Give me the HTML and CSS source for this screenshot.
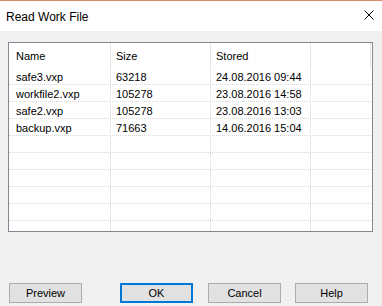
FILE: index.html
```html
<!DOCTYPE html>
<html lang="en">
<head>
  <meta charset="UTF-8">
  <title>Read Work File</title>
  <link rel="stylesheet" href="styles.css">
</head>
<body>
  <div class="window">
    <div class="titlebar">
      <span class="title">Read Work File</span>
      <svg class="close" width="10" height="10" viewBox="0 0 10 10">
        <path d="M0.5 0.5 L9.5 9.5 M9.5 0.5 L0.5 9.5" stroke="#000" stroke-width="1"/>
      </svg>
    </div>

    <div class="content">
      <div class="list">
        <div class="row head">
          <div class="cell">Name</div>
          <div class="cell">Size</div>
          <div class="cell">Stored</div>
          <div class="cell"></div>
        </div>
        <div class="row">
          <div class="cell">safe3.vxp</div>
          <div class="cell">63218</div>
          <div class="cell">24.08.2016 09:44</div>
          <div class="cell"></div>
        </div>
        <div class="row">
          <div class="cell">workfile2.vxp</div>
          <div class="cell">105278</div>
          <div class="cell">23.08.2016 14:58</div>
          <div class="cell"></div>
        </div>
        <div class="row">
          <div class="cell">safe2.vxp</div>
          <div class="cell">105278</div>
          <div class="cell">23.08.2016 13:03</div>
          <div class="cell"></div>
        </div>
        <div class="row">
          <div class="cell">backup.vxp</div>
          <div class="cell">71663</div>
          <div class="cell">14.06.2016 15:04</div>
          <div class="cell"></div>
        </div>
        <div class="row"><div class="cell"></div><div class="cell"></div><div class="cell"></div><div class="cell"></div></div>
        <div class="row"><div class="cell"></div><div class="cell"></div><div class="cell"></div><div class="cell"></div></div>
        <div class="row"><div class="cell"></div><div class="cell"></div><div class="cell"></div><div class="cell"></div></div>
        <div class="row"><div class="cell"></div><div class="cell"></div><div class="cell"></div><div class="cell"></div></div>
        <div class="row"><div class="cell"></div><div class="cell"></div><div class="cell"></div><div class="cell"></div></div>
        <div class="row"><div class="cell"></div><div class="cell"></div><div class="cell"></div><div class="cell"></div></div>
      </div>

      <div class="buttons">
        <button class="btn preview">Preview</button>
        <button class="btn default">OK</button>
        <button class="btn">Cancel</button>
        <button class="btn">Help</button>
      </div>
    </div>
  </div>
</body>
</html>
```

FILE: styles.css
```css
body {
  margin: 0;
  padding: 0;
  font-family: 'Liberation Sans', Arial, sans-serif;
  font-size: 11px;
  color: #000;
  background: #f0f0f0;
}

.window {
  width: 382px;
  height: 306px;
  overflow: hidden;
  background: #f0f0f0;
}

.titlebar {
  height: 30px;
  border-top: 1px solid #d9896d;
  background: #fff;
  display: flex;
  align-items: center;
  justify-content: space-between;
  padding: 0 8px 0 6px;
}

.title {
  font-size: 12px;
  margin-top: 1px;
}

.close {
  margin-top: -2px;
}

.content {
  padding: 11px 0 0 8px;
}

.list {
  width: 365px;
  height: 190px;
  box-sizing: border-box;
  border: 1px solid #828790;
  background: #fff;
  overflow: hidden;
}

.row {
  display: grid;
  grid-template-columns: 102px 100px 100px 1fr;
  height: 17px;
  box-sizing: border-box;
  border-bottom: 1px dotted #d9d9d9;
  margin-right: 1px;
}

.cell {
  box-sizing: border-box;
  border-right: 1px dotted #d9d9d9;
  padding-left: 5px;
  padding-top: 1px;
  line-height: 16px;
  white-space: nowrap;
}

.cell:first-child {
  padding-left: 7px;
}

.cell:last-child {
  border-right: none;
}

.row.head {
  height: 25px;
  border-bottom: none;
}

.row.head .cell {
  border-right: 1px solid #e5e5e5;
  padding-top: 0;
  line-height: 26px;
}

.buttons {
  display: flex;
  margin-top: 51px;
  padding-left: 1px;
}

.btn {
  width: 74px;
  height: 20px;
  box-sizing: border-box;
  font-family: 'Liberation Sans', Arial, sans-serif;
  font-size: 11px;
  color: #000;
  background: #e1e1e1;
  border: 1px solid #adadad;
  padding: 0;
  margin: 0 14px 0 0;
}

.btn.preview {
  margin-right: 38px;
}

.btn.default {
  border: 2px solid #0078d7;
  margin-right: 15px;
}
```
